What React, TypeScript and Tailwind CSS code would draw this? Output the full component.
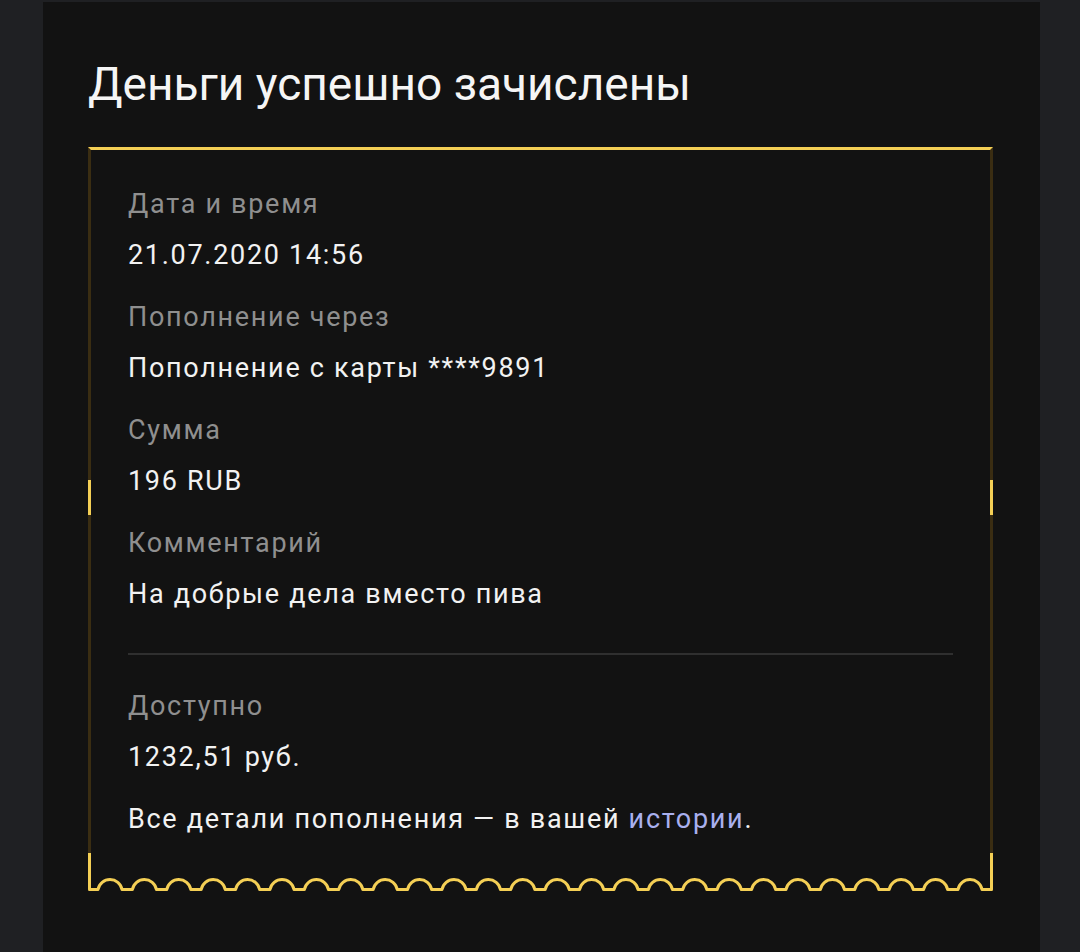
const rows = [
  { label: "Дата и время", value: "21.07.2020 14:56" },
  { label: "Пополнение через", value: "Пополнение с карты ****9891" },
  { label: "Сумма", value: "196 RUB" },
  { label: "Комментарий", value: "На добрые дела вместо пива" },
];

function Scallops({ width }: { width: number }) {
  // bottom ticket edge: flat line with little round bumps
  const y = 12.5;
  const start = 10;
  const chord = 24;
  const step = 34.4;
  let d = `M1.5 0 L1.5 ${y}`;
  for (let x = start; x + chord <= width - 8; x += step) {
    d += ` L${x} ${y} A12.2 12.2 0 0 1 ${x + chord} ${y}`;
  }
  d += ` L${width - 1.5} ${y} L${width - 1.5} 0`;
  return (
    <svg width={width} height={15} viewBox={`0 0 ${width} 15`} className="block">
      <path d={d} fill="none" stroke="#f4cf55" strokeWidth={3} strokeLinejoin="round" />
    </svg>
  );
}

function Field({ label, value }: { label: string; value: React.ReactNode }) {
  return (
    <div className="flex flex-col">
      <span className="text-[27px] leading-[51px] tracking-[1.7px] text-[#8f8f8f]">{label}</span>
      <span className="text-[27px] leading-[51px] tracking-[1.7px] text-[#f2f2f2]">{value}</span>
    </div>
  );
}

export default function App() {
  return (
    <div
      className="min-h-screen bg-[#1f2023] pl-[43px] pr-[40px] pt-[2px] flex"
      style={{ fontFamily: "Roboto, 'Noto Sans', sans-serif" }}
    >
      <div className="flex-1 bg-[#121212] pl-[45px] pr-[47px] pt-[52px] pb-[60px]">
        <h1 className="text-[46px] leading-[60px] text-[#f5f5f5] font-normal">
          Деньги успешно зачислены
        </h1>

        <div className="relative mt-[33px] border-t-[3px] border-x-[3px] border-t-[#f4cf55] border-x-[#3a2d12] pt-[29px] px-[37px] pb-[46px]">
          <span className="absolute -left-[3px] top-[330px] w-[3px] h-[35px] bg-[#f4cf55]" />
          <span className="absolute -right-[3px] top-[330px] w-[3px] h-[35px] bg-[#f4cf55]" />
          <span className="absolute -left-[3px] bottom-[2px] w-[3px] h-[36px] bg-[#f4cf55]" />
          <span className="absolute -right-[3px] bottom-[2px] w-[3px] h-[36px] bg-[#f4cf55]" />

          <div className="flex flex-col gap-[11px]">
            {rows.map((r) => (
              <Field key={r.label} label={r.label} value={r.value} />
            ))}
          </div>

          <div className="mt-[33px] mb-[26px] h-[2px] bg-[#2f2f2f]" />

          <div className="flex flex-col gap-[11px]">
            <Field label="Доступно" value="1232,51 руб." />
            <p className="text-[27px] leading-[51px] tracking-[1.7px] text-[#f2f2f2]">
              Все детали пополнения — в вашей <span className="text-[#a9b0ee]">истории</span>.
            </p>
          </div>

          <div className="absolute -left-[3px] -bottom-[1px]">
            <Scallops width={905} />
          </div>
        </div>
      </div>
    </div>
  );
}
